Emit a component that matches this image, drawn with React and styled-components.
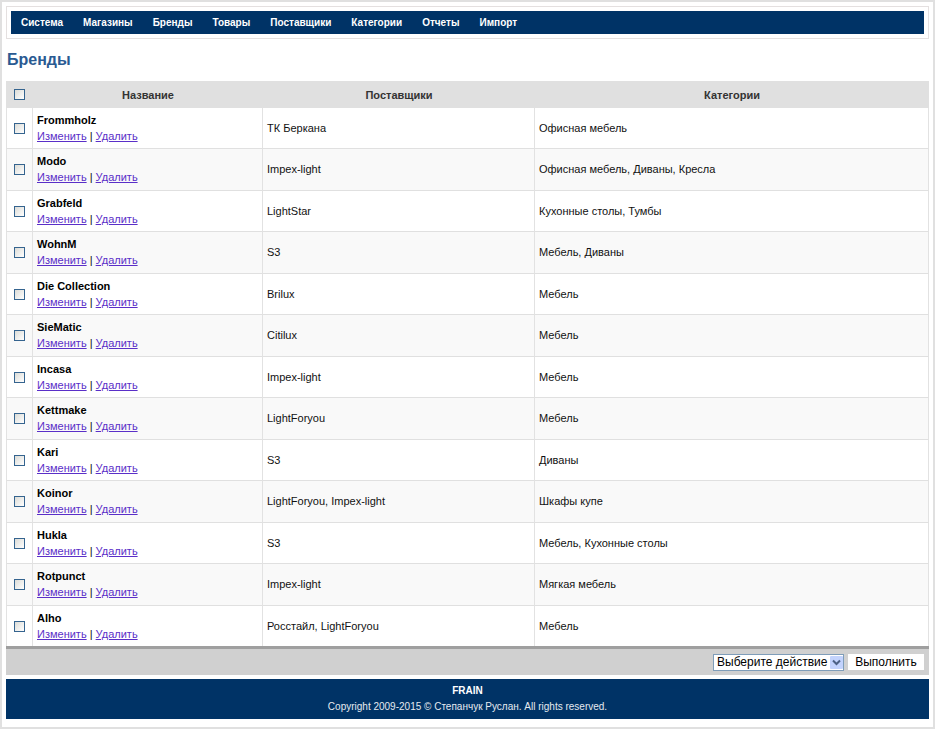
import { useState } from 'react'
import styled, { createGlobalStyle } from 'styled-components'

const GlobalStyle = createGlobalStyle`
    * {
        box-sizing: border-box;
    }
    body {
        margin: 0;
        background: #fff;
        color: #111;
        font: 11px/16px "Liberation Sans", Arial, sans-serif;
    }
`
const Page = styled.div`
    border: 2px solid #e0e0e0;
    padding: 4px 4px 8px;
`
const Header = styled.header`
    border: 1px solid #e4e0e0;
    padding: 4px;
`
const Menu = styled.nav`
    display: flex;
    gap: 20px;
    height: 23px;
    padding: 0 10px;
    background: #003366;
`
const MenuLink = styled.a`
    color: #fff;
    font-size: 10px;
    font-weight: bold;
    line-height: 23px;
    text-decoration: none;
`
const Title = styled.h1`
    margin: 0;
    padding: 11px 1px 11px;
    color: #2a5a92;
    font-size: 16px;
    line-height: 20px;
`
const Table = styled.table`
    width: 100%;
    table-layout: fixed;
    border-collapse: separate;
    border-spacing: 0;
`
const HeadCell = styled.th`
    width: ${props => props.$width};
    height: 27px;
    padding: 0;
    background: #e0e0e0;
    color: #333;
    text-align: center;
    vertical-align: middle;
`
const Row = styled.tr`
    height: 41px;
    &:nth-child(even) {
        height: 42px;
        background: #f9f9f9;
    }
    &:last-child {
        height: 40px;
    }
`
const Cell = styled.td`
    padding: 3px 4px 4px;
    border-right: 1px solid #e2e2e2;
    border-bottom: 1px solid #e0e0e0;
    vertical-align: middle;
    &:first-child {
        padding: 0;
        border-left: 1px solid #e2e2e2;
        text-align: center;
    }
    tr:last-child > & {
        border-bottom: 0;
    }
`
const Check = styled.input`
    appearance: none;
    display: block;
    width: 11px;
    height: 11px;
    margin: 0 auto;
    border: 1px solid #35648f;
    background: linear-gradient(135deg, #dcdcd7, #fff);
    &:checked {
        background: #35648f;
    }
`
const Name = styled.div`
    font-weight: bold;
    color: #000;
`
const Action = styled.a`
    color: #5a2fc8;
    text-decoration: underline;
`
const Toolbar = styled.div`
    display: flex;
    align-items: center;
    justify-content: flex-end;
    gap: 4px;
    height: 29px;
    padding: 0 5px 0 0;
    border-top: 3px solid #9f9f9f;
    background: #d0d0d0;
`
const SelectBox = styled.div`
    position: relative;
    width: 131px;
    height: 17px;
`
const Select = styled.select`
    appearance: none;
    display: block;
    width: 100%;
    height: 17px;
    padding: 0 14px 0 3px;
    border: 1px solid #7f9db9;
    border-radius: 0;
    background: #fff;
    color: #000;
    font: 12px/15px "Liberation Sans", Arial, sans-serif;
`
const Arrow = styled.svg`
    position: absolute;
    top: 2px;
    right: 1px;
    pointer-events: none;
`
const Button = styled.button`
    width: 76px;
    height: 16px;
    padding: 0;
    border: 0;
    background: #fff;
    color: #000;
    font: 12px/16px "Liberation Sans", Arial, sans-serif;
`
const Footer = styled.footer`
    margin-top: 4px;
    padding: 4px;
    background: #003366;
    color: #e4eaf0;
    font-size: 10px;
    text-align: center;
`
const FooterName = styled.div`
    color: #fff;
    font-weight: bold;
`

const menu = ['Система', 'Магазины', 'Бренды', 'Товары', 'Поставщики', 'Категории', 'Отчеты', 'Импорт']

const brands = [
    { name: 'Frommholz', suppliers: 'ТК Беркана', categories: 'Офисная мебель' },
    { name: 'Modo', suppliers: 'Impex-light', categories: 'Офисная мебель, Диваны, Кресла' },
    { name: 'Grabfeld', suppliers: 'LightStar', categories: 'Кухонные столы, Тумбы' },
    { name: 'WohnM', suppliers: 'S3', categories: 'Мебель, Диваны' },
    { name: 'Die Collection', suppliers: 'Brilux', categories: 'Мебель' },
    { name: 'SieMatic', suppliers: 'Citilux', categories: 'Мебель' },
    { name: 'Incasa', suppliers: 'Impex-light', categories: 'Мебель' },
    { name: 'Kettmake', suppliers: 'LightForyou', categories: 'Мебель' },
    { name: 'Kari', suppliers: 'S3', categories: 'Диваны' },
    { name: 'Koinor', suppliers: 'LightForyou, Impex-light', categories: 'Шкафы купе' },
    { name: 'Hukla', suppliers: 'S3', categories: 'Мебель, Кухонные столы' },
    { name: 'Rotpunct', suppliers: 'Impex-light', categories: 'Мягкая мебель' },
    { name: 'Alho', suppliers: 'Росстайл, LightForyou', categories: 'Мебель' },
]

const App = () => {
    const [checked, setChecked] = useState([])

    const toggle = (name) => {
        setChecked(checked.includes(name) ? checked.filter(n => n !== name) : [...checked, name])
    }
    const toggleAll = (e) => {
        setChecked(e.target.checked ? brands.map(b => b.name) : [])
    }

    return (
        <Page>
            <GlobalStyle />
            <Header>
                <Menu>
                    {menu.map(item => <MenuLink href="#" key={item}>{item}</MenuLink>)}
                </Menu>
            </Header>
            <Title>Бренды</Title>
            <Table>
                <thead>
                    <tr>
                        <HeadCell $width="27px">
                            <Check
                                type="checkbox"
                                aria-label="Выбрать все"
                                checked={checked.length === brands.length}
                                onChange={toggleAll}
                            />
                        </HeadCell>
                        <HeadCell $width="230px">Название</HeadCell>
                        <HeadCell $width="272px">Поставщики</HeadCell>
                        <HeadCell>Категории</HeadCell>
                    </tr>
                </thead>
                <tbody>
                    {brands.map(brand => (
                        <Row key={brand.name}>
                            <Cell>
                                <Check
                                    type="checkbox"
                                    aria-label={brand.name}
                                    checked={checked.includes(brand.name)}
                                    onChange={() => toggle(brand.name)}
                                />
                            </Cell>
                            <Cell>
                                <Name>{brand.name}</Name>
                                <Action href="#">Изменить</Action> | <Action href="#">Удалить</Action>
                            </Cell>
                            <Cell>{brand.suppliers}</Cell>
                            <Cell>{brand.categories}</Cell>
                        </Row>
                    ))}
                </tbody>
            </Table>
            <Toolbar>
                <SelectBox>
                    <Select aria-label="Действие">
                        <option>Выберите действие</option>
                    </Select>
                    <Arrow width="13" height="13" viewBox="0 0 13 13">
                        <rect width="13" height="13" rx="1" fill="#c3d3fd" />
                        <path d="M3 4.5l3.5 3.5 3.5-3.5" fill="none" stroke="#4d6185" strokeWidth="2" />
                    </Arrow>
                </SelectBox>
                <Button type="button">Выполнить</Button>
            </Toolbar>
            <Footer>
                <FooterName>FRAIN</FooterName>
                Copyright 2009-2015 © Степанчук Руслан. All rights reserved.
            </Footer>
        </Page>
    )
}

export default App
